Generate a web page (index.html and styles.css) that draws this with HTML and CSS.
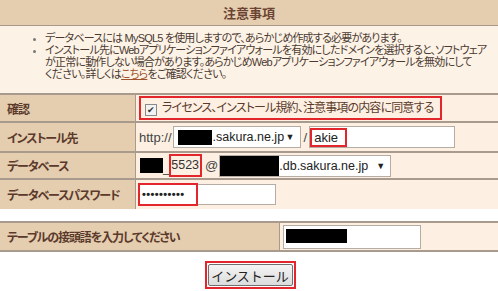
FILE: index.html
```html
<!DOCTYPE html>
<html lang="ja">
<head>
    <meta charset="UTF-8">
    <title>インストール</title>
    <link rel="stylesheet" href="styles.css">
</head>
<body>
    <table class="form-table">
        <tr>
            <th colspan="2" class="caption">注意事項</th>
        </tr>
        <tr>
            <td colspan="2" class="notes">
                <ul>
                    <li>データベースには MySQL5 を使用しますので、あらかじめ作成する必要があります。</li>
                    <li>インストール先にWebアプリケーションファイアウォールを有効にしたドメインを選択すると、ソフトウェア<br>が正常に動作しない場合があります。あらかじめWebアプリケーションファイアウォールを無効にして<br>ください。詳しくは<a href="#">こちら</a>をご確認ください。</li>
                </ul>
            </td>
        </tr>
        <tr class="row-agree">
            <th>確認</th>
            <td>
                <label class="mark agree"><span class="check">&#10004;</span>ライセンス、インストール規約、注意事項の内容に同意する</label>
            </td>
        </tr>
        <tr class="row-dest">
            <th>インストール先</th>
            <td>
                <div class="line">
                    <span class="plain">http://</span>
                    <span class="select domain"><span class="redact r-domain"></span>.sakura.ne.jp<span class="arrow">&#9660;</span></span>
                    <span class="plain slash">/</span>
                    <span class="field dir"><span class="mark word">akie</span></span>
                </div>
            </td>
        </tr>
        <tr class="row-db">
            <th>データベース</th>
            <td>
                <div class="line">
                    <span class="redact r-user"></span>
                    <span class="plain under">_</span>
                    <span class="mark num">5523</span>
                    <span class="plain at">@</span>
                    <span class="select host"><span class="redact r-host"></span>.db.sakura.ne.jp<span class="arrow">&#9660;</span></span>
                </div>
            </td>
        </tr>
        <tr class="row-pass">
            <th>データベースパスワード</th>
            <td>
                <span class="field pass"><span class="mark dots">&#8226;&#8226;&#8226;&#8226;&#8226;&#8226;&#8226;&#8226;&#8226;&#8226;</span></span>
            </td>
        </tr>
    </table>

    <table class="form-table prefix">
        <tr>
            <th>テーブルの接頭語を入力してください</th>
            <td>
                <span class="field prefix-field"><span class="redact r-prefix"></span></span>
            </td>
        </tr>
    </table>

    <div class="actions">
        <span class="mark btn-mark"><button type="button">インストール</button></span>
    </div>
</body>
</html>
```

FILE: styles.css
```css
body {
    margin: 0;
    font-family: "Liberation Sans", "Noto Sans CJK JP", sans-serif;
    font-feature-settings: "palt";
    background: #fff;
    color: #333;
}
.form-table {
    width: 100%;
    border-collapse: collapse;
}
.form-table th,
.form-table td {
    padding: 0;
}
.caption {
    height: 25px;
    background: #e5cdb0;
    color: #6b4433;
    font-size: 13px;
    font-weight: bold;
    text-align: center;
    border-bottom: 1px solid #a8998a;
}
.form-table .notes {
    height: 61px;
    background: #fdf2e6;
    vertical-align: top;
    padding-top: 6px;
}
.notes ul {
    margin: 0;
    padding-left: 45px;
    font-size: 11px;
    line-height: 12px;
    color: #4a3a31;
    letter-spacing: -0.8px;
}
.notes li::marker {
    color: #777;
    font-size: 9px;
}
.notes a {
    color: #a0522d;
}
.form-table tr + tr + tr th,
.form-table tr + tr + tr td {
    border-top: 2px solid #a89a8c;
}
.form-table tr + tr + tr th,
.prefix th {
    width: 128px;
    background: #e5cdb0;
    color: #5b3a2b;
    font-size: 12px;
    font-weight: bold;
    text-align: left;
    padding-left: 7px;
    border-right: 1px solid #a89a8c;
    letter-spacing: -1.1px;
}
.form-table tr + tr + tr td,
.prefix td {
    background: #fdf0e3;
    padding-left: 3px;
    font-size: 13px;
    white-space: nowrap;
}
.row-agree { height: 28px; }
.row-dest { height: 30px; }
.row-db { height: 27px; }
.row-pass { height: 30px; }
.line {
    display: flex;
    align-items: center;
}
.mark {
    border: 2px solid #e2262c;
    display: inline-block;
    vertical-align: middle;
}
.agree {
    font-size: 12px;
    color: #5b3a2b;
    width: 299px;
    height: 20px;
    line-height: 20px;
    letter-spacing: -0.85px;
}
.check {
    display: inline-block;
    width: 10px;
    height: 10px;
    margin: 0 5px 0 4px;
    border: 1px solid #8a8a8a;
    background: #f2f2f2;
    font-size: 9px;
    line-height: 10px;
    text-align: center;
    color: #333;
    vertical-align: -1px;
    letter-spacing: 0;
}
.plain {
    color: #444;
}
.select,
.field {
    display: inline-block;
    vertical-align: middle;
    background: #fff;
    border: 1px solid #b5aca3;
    height: 20px;
    line-height: 20px;
    color: #222;
}
.select {
    display: inline-flex;
    align-items: center;
    padding-left: 4px;
    font-size: 12.5px;
}
.arrow {
    font-size: 9px;
    margin-left: auto;
    margin-right: 5px;
}
.domain {
    width: 122px;
    margin-left: 1px;
}
.slash {
    margin: 0 2px 0 3px;
}
.dir {
    width: 144px;
}
.word {
    width: 31px;
    height: 15px;
    line-height: 15px;
    padding-left: 2px;
}
.redact {
    display: inline-block;
    background: #000;
}
.r-domain { width: 34px; height: 15px; margin-right: 1px; }
.r-user { width: 23px; height: 15px; margin-left: 1px; }
.r-host { width: 59px; height: 20px; margin-left: -4px; }
.r-prefix { width: 61px; height: 14px; margin: 3px 0 0 2px; vertical-align: top; }
.under {
    align-self: flex-end;
    margin: 0 -1px 3px 0;
    line-height: 12px;
}
.num {
    padding: 0 1px 0 0;
    height: 19px;
    line-height: 19px;
    font-size: 12.5px;
}
.at {
    margin: 0 1px 0 3px;
}
.host {
    width: 166px;
}
.pass {
    width: 135px;
    height: 19px;
}
.dots {
    margin: -2px 0 0 -2px;
    width: 54px;
    height: 19px;
    line-height: 19px;
    font-size: 11px;
    font-weight: bold;
    letter-spacing: 0.4px;
    padding-left: 2px;
}
.prefix {
    margin-top: 12px;
}
.prefix th,
.prefix td {
    height: 27px;
    border-top: 2px solid #a89a8c;
    border-bottom: 2px solid #a89a8c;
}
.prefix th {
    width: 272px;
    font-size: 12px;
}
.prefix-field {
    width: 136px;
    height: 22px;
    vertical-align: middle;
}
.actions {
    text-align: center;
    margin-top: 9px;
    padding-left: 2px;
}
.btn-mark {
    padding: 1px;
}
button {
    width: 85px;
    height: 22px;
    font-family: "Liberation Sans", "Noto Sans CJK JP", sans-serif;
    font-size: 13px;
    color: #222;
    background: linear-gradient(#f4f4f4, #dcdcdc);
    border: 1px solid #707070;
    border-radius: 2px;
    padding: 0;
}
```
